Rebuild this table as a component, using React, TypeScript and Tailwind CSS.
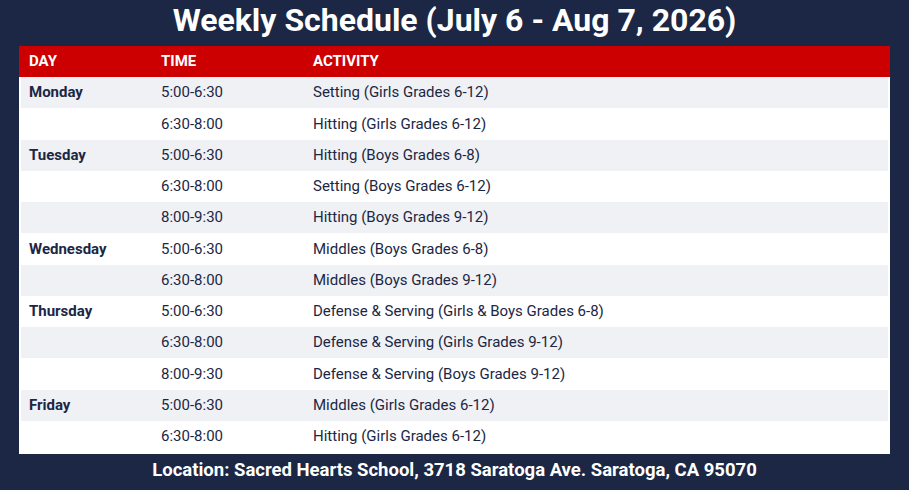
const ROWS: { day: string; time: string; activity: string }[] = [
  { day: 'Monday', time: '5:00-6:30', activity: 'Setting (Girls Grades 6-12)' },
  { day: '', time: '6:30-8:00', activity: 'Hitting (Girls Grades 6-12)' },
  { day: 'Tuesday', time: '5:00-6:30', activity: 'Hitting (Boys Grades 6-8)' },
  { day: '', time: '6:30-8:00', activity: 'Setting (Boys Grades 6-12)' },
  { day: '', time: '8:00-9:30', activity: 'Hitting (Boys Grades 9-12)' },
  { day: 'Wednesday', time: '5:00-6:30', activity: 'Middles (Boys Grades 6-8)' },
  { day: '', time: '6:30-8:00', activity: 'Middles (Boys Grades 9-12)' },
  { day: 'Thursday', time: '5:00-6:30', activity: 'Defense & Serving (Girls & Boys Grades 6-8)' },
  { day: '', time: '6:30-8:00', activity: 'Defense & Serving (Girls Grades 9-12)' },
  { day: '', time: '8:00-9:30', activity: 'Defense & Serving (Boys Grades 9-12)' },
  { day: 'Friday', time: '5:00-6:30', activity: 'Middles (Girls Grades 6-12)' },
  { day: '', time: '6:30-8:00', activity: 'Hitting (Girls Grades 6-12)' },
]

export default function App() {
  return (
    <div
      className="w-[909px] h-[490px] bg-[#1b2744] flex flex-col items-center overflow-hidden"
      style={{ fontFamily: 'Roboto, "Liberation Sans", sans-serif' }}
    >
      <h1 className="h-[46px] text-[32px] leading-[40px] font-bold text-white">
        Weekly Schedule (July 6 - Aug 7, 2026)
      </h1>

      <div className="w-[871px] bg-white">
        <div className="h-[31px] bg-[#cc0000] grid grid-cols-[142px_152px_1fr] items-center text-[15px] font-bold text-white">
          <span className="pl-[10px]">DAY</span>
          <span>TIME</span>
          <span>ACTIVITY</span>
        </div>
        <div className="px-[2px] pb-[2px]">
          {ROWS.map((row, i) => (
            <div
              key={i}
              className={`h-[31.25px] grid grid-cols-[140px_152px_1fr] items-center text-[15px] text-[#1b2744] ${
                i % 2 === 0 ? 'bg-[#f0f1f5]' : 'bg-white'
              }`}
            >
              <span className="pl-[8px] font-bold">{row.day}</span>
              <span>{row.time}</span>
              <span>{row.activity}</span>
            </div>
          ))}
        </div>
      </div>

      <p className="mt-[4px] text-[18.5px] leading-[24px] font-bold text-white">
        Location: Sacred Hearts School, 3718 Saratoga Ave. Saratoga, CA 95070
      </p>
    </div>
  )
}
